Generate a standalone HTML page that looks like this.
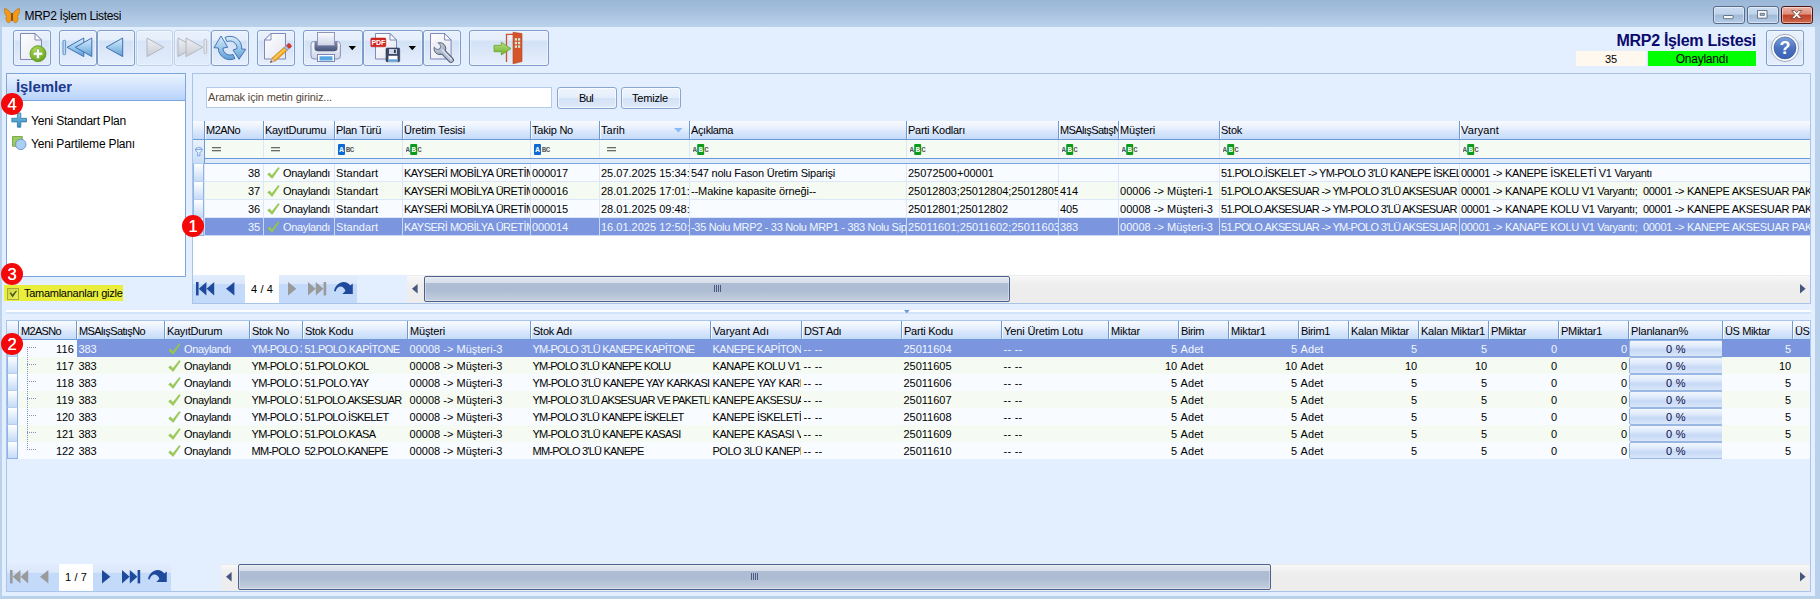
<!DOCTYPE html><html lang="tr"><head><meta charset="utf-8"><title>MRP2 İşlem Listesi</title><style>
*{box-sizing:border-box;margin:0;padding:0}
html,body{width:1820px;height:599px;overflow:hidden;background:#b9d1ea}
body{position:relative;font-family:"Liberation Sans",sans-serif;font-size:11px;color:#000;line-height:1}
.a{position:absolute}
.t{position:absolute;white-space:nowrap;overflow:hidden}
#title{left:0;top:0;width:1820px;height:27px;background:linear-gradient(#9bb7d7,#a5bfdd 40%,#bbd2eb)}
#client{left:2px;top:27px;width:1813px;height:569px;background:#e3eefe}
.tb{position:absolute;top:30px;height:36px;border:1px solid #7f9dca;border-radius:3px;background:linear-gradient(#e9f1fc 0,#e5eefb 27%,#d3e2f6 29%,#dbe7f9 60%,#e6effc 100%);box-shadow:inset 0 0 0 1px rgba(255,255,255,.4)}
.tb.dis{border-color:#c0d1ea;background:linear-gradient(#e9f1fc 0,#e5eefb 27%,#d8e5f8 29%,#e1ecfb 100%)}
.panel{position:absolute;border:1px solid #a9c4e9}
.hdr{position:absolute;background:linear-gradient(#f9fbff 0,#e8f0fd 38%,#d4e4fb 68%,#c5dafa 100%);border-bottom:1px solid #6b9ad9}
.hc{position:absolute;top:0;height:100%;border-left:1px solid #6b9ad9;box-shadow:inset 1px 0 0 rgba(255,255,255,.8);overflow:hidden}
.hc span{position:absolute;left:1px;white-space:nowrap}
.row{position:absolute;left:0}
.c{position:absolute;top:0;height:100%;overflow:hidden;white-space:nowrap;padding:1px 0 0 2.5px;line-height:17px}
.g1 .c{border-left:1px solid #dce8f8;padding-left:1px;padding-top:1px}
.c.r{text-align:right;padding-right:1px}
.sel .c{color:#f2f6fe;border-left-color:#cbd9f4}
.ind{position:absolute;left:0;width:11px;border:1px solid #8fb3e6;border-top-color:#b7cff0;background:linear-gradient(#ffffff,#c6dbf8)}
.btn{position:absolute;border:1px solid #8aa6d0;border-radius:3px;background:linear-gradient(#eff5fd 0,#e3edfb 48%,#d3e1f6 52%,#e0ebfa 100%);text-align:center;box-shadow:inset 0 0 0 1px rgba(255,255,255,.6)}
.red{position:absolute;width:22px;height:22px;border-radius:11px;background:#f50808;color:#fff;text-align:center;font-size:16.5px;line-height:22px;text-shadow:0 0 .6px #fff}
.nav{position:absolute;background:linear-gradient(#e2ecfc 0,#dbe7fb 31%,#c3dafa 34%,#c3dafa 100%)}
.sb{position:absolute;background:linear-gradient(#e0e0e0 0,#f8f8f8 4%,#f4f4f4 14%,#eeeeee 34%,#ededed 100%)}
.thumb{position:absolute;border:1px solid #4e618e;border-radius:2px;background:linear-gradient(#e3e8ef 0,#d7dee8 25%,#aebdd3 26%,#adbcd2 55%,#c5d0e0 100%);box-shadow:inset 0 0 0 1px rgba(255,255,255,.35)}
.pg{position:absolute;left:1px;top:0;height:17px;border:1px solid #9ab7e3;border-radius:2px;background:linear-gradient(#f2f7fe 0,#dfeafb 35%,#c6d9f5 60%,#d9e6fa 100%);color:#0a0a4a;text-align:center;line-height:17px}
</style></head><body>
<svg width="0" height="0" style="position:absolute"><defs>
<linearGradient id="gPage" x1="0" y1="0" x2="1" y2="1"><stop offset="0" stop-color="#ffffff"/><stop offset="1" stop-color="#e3e6f1"/></linearGradient>
<linearGradient id="gBlue" x1="0" y1="0" x2="0" y2="1"><stop offset="0" stop-color="#d8ecf9"/><stop offset=".5" stop-color="#9cc9ea"/><stop offset="1" stop-color="#5f9dd3"/></linearGradient>
<linearGradient id="gGray" x1="0" y1="0" x2="0" y2="1"><stop offset="0" stop-color="#eef0f4"/><stop offset="1" stop-color="#c9ccd4"/></linearGradient>
<radialGradient id="gGreen" cx=".4" cy=".3" r=".8"><stop offset="0" stop-color="#b4dc5c"/><stop offset=".6" stop-color="#7fb82c"/><stop offset="1" stop-color="#5c961c"/></radialGradient>
<linearGradient id="gHelp" x1="0" y1="0" x2="0" y2="1"><stop offset="0" stop-color="#7fa3dc"/><stop offset=".5" stop-color="#4a72c0"/><stop offset="1" stop-color="#3a63b4"/></linearGradient>
<linearGradient id="gPrn" x1="0" y1="0" x2="0" y2="1"><stop offset="0" stop-color="#fbfcfe"/><stop offset="1" stop-color="#cfd5e6"/></linearGradient>
<linearGradient id="gSlot" x1="0" y1="0" x2="0" y2="1"><stop offset="0" stop-color="#7d8aa8"/><stop offset="1" stop-color="#46527a"/></linearGradient>
<linearGradient id="gArrow" x1="0" y1="0" x2="0" y2="1"><stop offset="0" stop-color="#b8e07a"/><stop offset="1" stop-color="#6fae2f"/></linearGradient>
<linearGradient id="gWr" x1="0" y1="0" x2="1" y2="1"><stop offset="0" stop-color="#dfe6f0"/><stop offset="1" stop-color="#8c9ab0"/></linearGradient>
<linearGradient id="gPlus" x1="0" y1="0" x2="0" y2="1"><stop offset="0" stop-color="#7cc0e0"/><stop offset="1" stop-color="#3a8cc0"/></linearGradient>
</defs></svg>
<div id="title" class="a"></div>
<svg class="a" style="left:4px;top:8px" width="16" height="16" viewBox="0 0 16 16" ><path d="M7.6 7.2 C6 2.5 2.5 .6 .4 .6 C.2 4 1.2 7 2.6 8.4 C1.4 9.6 1.6 12.6 3.6 14.4 C5.4 15.6 7 13.6 7.6 10.6 Z" fill="#f49a12" stroke="#a8621a" stroke-width=".5"/><path d="M8.4 7.2 C10 2.5 13.5 .6 15.6 .6 C15.8 4 14.8 7 13.4 8.4 C14.6 9.6 14.4 12.6 12.4 14.4 C10.6 15.6 9 13.6 8.4 10.6 Z" fill="#f49a12" stroke="#a8621a" stroke-width=".5"/><path d="M8 5.4 V12.4" stroke="#5a3418" stroke-width="1.3" stroke-linecap="round"/></svg>
<div class="t" style="left:24.5px;top:9px;font-size:12px;letter-spacing:-0.345px;line-height:15px;">MRP2 İşlem Listesi</div>
<div class="a" style="left:1713px;top:6px;width:32px;height:18px;border:1px solid #586c8a;border-radius:3px;background:linear-gradient(#cbdcf0 0,#bed3eb 45%,#9fb9d7 50%,#b5cce7 100%);box-shadow:inset 0 0 0 1px rgba(255,255,255,.45)"></div>
<div class="a" style="left:1747px;top:6px;width:32px;height:18px;border:1px solid #586c8a;border-radius:3px;background:linear-gradient(#cbdcf0 0,#bed3eb 45%,#9fb9d7 50%,#b5cce7 100%);box-shadow:inset 0 0 0 1px rgba(255,255,255,.45)"></div>
<div class="a" style="left:1781px;top:6px;width:32px;height:18px;border:1px solid #4e1616;border-radius:3px;background:linear-gradient(#eab2a4 0,#de8e7c 45%,#bf3f26 50%,#d0694d 100%);box-shadow:inset 0 0 0 1px rgba(255,255,255,.45)"></div>
<svg class="a" style="left:1723px;top:15px" width="11" height="5" viewBox="0 0 11 5" ><rect x=".5" y=".5" width="9.6" height="3.2" rx=".6" fill="#f4f6f8" stroke="#4c5a70" stroke-width=".8"/></svg>
<svg class="a" style="left:1757px;top:10px" width="11" height="9" viewBox="0 0 11 9" ><path d="M.5 .5 H10 V8.2 H.5 Z M3.2 3.4 H7.4 V5.3 H3.2 Z" fill="#f4f6f8" fill-rule="evenodd" stroke="#4c5a70" stroke-width=".8"/></svg>
<svg class="a" style="left:1791px;top:10px" width="12" height="10" viewBox="0 0 12 10" ><path d="M.6 .6 L3.8 .6 L5.7 2.7 L7.6 .6 L10.8 .6 L7.4 4.5 L11 8.6 L7.7 8.6 L5.7 6.3 L3.7 8.6 L.4 8.6 L4 4.5 Z" fill="#f8f8f8" stroke="#5a2a22" stroke-width=".7" stroke-linejoin="round"/></svg>
<div id="client" class="a"></div>
<div class="tb" style="left:13px;width:38px"></div>
<svg class="a" style="left:13px;top:30px" width="38" height="36" viewBox="0 0 38 36" ><g transform="translate(7,3)"><path d="M.5 .5 H15 L21.5 7 V26.5 H.5 Z" fill="url(#gPage)" stroke="#747db2" stroke-width=".9"/><path d="M15 .5 V7 H21.5 Z" fill="#fdfdff" stroke="#747db2" stroke-width=".9" stroke-linejoin="round"/></g><circle cx="25" cy="23.7" r="8" fill="url(#gGreen)" stroke="#5a9420" stroke-width=".8"/><path d="M23.5 19 h3 v3.2 h3.2 v3 h-3.2 v3.2 h-3 v-3.2 h-3.2 v-3 h3.2 Z" fill="#fff" stroke="#6a9a3a" stroke-width=".5"/></svg>
<div class="tb" style="left:59px;width:38px"></div>
<svg class="a" style="left:59px;top:30px" width="38" height="36" viewBox="0 0 38 36" ><rect x="4" y="10.3" width="2.6" height="14.4" rx="1" fill="#b8dbf3" stroke="#4a7cc0" stroke-width=".8"/><path d="M8 17.3 L24.8 8.0 V26.6 Z" fill="url(#gBlue)" stroke="#3f6fb5" stroke-width="1" stroke-linejoin="round"/><path d="M16.4 17.3 L32.8 8.0 V26.6 Z" fill="url(#gBlue)" stroke="#3f6fb5" stroke-width="1" stroke-linejoin="round"/></svg>
<div class="tb" style="left:97px;width:38px"></div>
<svg class="a" style="left:97px;top:30px" width="38" height="36" viewBox="0 0 38 36" ><path d="M9 17.3 L25.7 8.0 V26.6 Z" fill="url(#gBlue)" stroke="#3f6fb5" stroke-width="1" stroke-linejoin="round"/></svg>
<div class="tb dis" style="left:136px;width:37px"></div>
<svg class="a" style="left:135px;top:30px" width="38" height="36" viewBox="0 0 38 36" ><path d="M28.7 17.3 L12 8 V26.6 Z" fill="url(#gGray)" stroke="#b3b6bf" stroke-width="1" stroke-linejoin="round"/></svg>
<div class="tb dis" style="left:174px;width:37px"></div>
<svg class="a" style="left:173px;top:30px" width="38" height="36" viewBox="0 0 38 36" ><path d="M22 17.3 L5 8 V26.6 Z" fill="url(#gGray)" stroke="#b3b6bf" stroke-width="1" stroke-linejoin="round"/><path d="M29.7 17.3 L13 8 V26.6 Z" fill="url(#gGray)" stroke="#b3b6bf" stroke-width="1" stroke-linejoin="round"/><rect x="31" y="9.3" width="2.6" height="14.4" rx="1" fill="#e4e6ea" stroke="#b3b6bf" stroke-width=".8"/></svg>
<div class="tb" style="left:211px;width:38px"></div>
<svg class="a" style="left:211px;top:30px" width="38" height="36" viewBox="0 0 38 36" ><path d="M10 6 L3 17.7 L7.3 18 A11.7 11.7 0 0 0 23.94 28.6 L21.96 24.34 A7 7 0 0 1 12 18 L16.7 17.3 Z" fill="url(#gBlue)" stroke="#3a6ab2" stroke-width=".9" stroke-linejoin="round"/><path d="M14.06 7.4 A11.7 11.7 0 0 1 30.66 19 L34.7 19.3 L28 29.3 L22 20 L25.97 18.6 A7 7 0 0 0 16.04 11.66 Z" fill="url(#gBlue)" stroke="#3a6ab2" stroke-width=".9" stroke-linejoin="round"/></svg>
<div class="tb" style="left:257px;width:38px"></div>
<svg class="a" style="left:257px;top:30px" width="38" height="36" viewBox="0 0 38 36" ><g transform="translate(7,3)"><path d="M7 .5 H21.5 V26.0 H.5 V7 Z" fill="url(#gPage)" stroke="#747db2" stroke-width=".9"/><path d="M7 .5 V7 H.5 Z" fill="#fdfdff" stroke="#747db2" stroke-width=".9" stroke-linejoin="round"/></g><g transform="translate(13.2,32.6) rotate(-41.6)"><path d="M0 0 L5 -2.2 V2.2 Z" fill="#e9c9a0" stroke="#8a6a40" stroke-width=".4"/><path d="M0 0 L1.8 -.95 V.95 Z" fill="#2c2c3a"/><rect x="5" y="-2.2" width="15.5" height="4.4" fill="#f3a61c" stroke="#b87408" stroke-width=".5"/><rect x="5" y="-.9" width="15.5" height="1.4" fill="#fbd069"/><rect x="20.5" y="-2.2" width="3" height="4.4" fill="#a9b7d6" stroke="#6d7da6" stroke-width=".4"/><rect x="23.5" y="-2.2" width="3.6" height="4.4" rx="1" fill="#d9372a" stroke="#a02018" stroke-width=".4"/></g></svg>
<div class="tb" style="left:303px;width:60px"></div>
<svg class="a" style="left:303px;top:30px" width="60" height="36" viewBox="0 0 60 36" ><rect x="8" y="11.5" width="29.4" height="17.5" rx="3" fill="url(#gPrn)" stroke="#8790bd" stroke-width="1"/><path d="M11.5 12 H34.5 V18 Q34.5 21.3 31 21.3 H15 Q11.5 21.3 11.5 18 Z" fill="url(#gSlot)"/><rect x="14.5" y="2.5" width="17" height="13" fill="url(#gPrn)" stroke="#8e95b8" stroke-width="1"/><rect x="14.5" y="24.5" width="17" height="7" fill="#fff" stroke="#7d86b4" stroke-width="1"/><rect x="16.5" y="26.3" width="13" height="4.2" fill="#56a6e4"/><path d="M45.6 16 h7.4 l-3.7 4.2 Z" fill="#000"/></svg>
<div class="tb" style="left:363px;width:60px"></div>
<svg class="a" style="left:363px;top:30px" width="60" height="36" viewBox="0 0 60 36" ><g transform="translate(12,3)"><path d="M.5 .5 H15 L21.5 7 V26.0 H.5 Z" fill="url(#gPage)" stroke="#747db2" stroke-width=".9"/><path d="M15 .5 V7 H21.5 Z" fill="#fdfdff" stroke="#747db2" stroke-width=".9" stroke-linejoin="round"/></g><rect x="7.8" y="8" width="15" height="8.8" rx="1" fill="#d42626" stroke="#b01818" stroke-width=".5"/><text x="15.3" y="15" font-family="Liberation Sans,sans-serif" font-weight="bold" font-size="7" fill="#fff" text-anchor="middle" letter-spacing="-.2">PDF</text><rect x="23" y="18" width="13.7" height="13.7" rx="1" fill="#3d4868" stroke="#2c3552" stroke-width=".6"/><rect x="26" y="19" width="8" height="5" fill="#cfd6e6"/><rect x="31" y="19.6" width="1.8" height="3.4" fill="#2c3552"/><rect x="25.5" y="25.8" width="9" height="5.9" fill="#fff"/><rect x="25.5" y="29.3" width="9" height="2.4" fill="#5aa4e0"/><path d="M45.6 16 h7.4 l-3.7 4.2 Z" fill="#000"/></svg>
<div class="tb" style="left:423px;width:38px"></div>
<svg class="a" style="left:423px;top:30px" width="38" height="36" viewBox="0 0 38 36" ><g transform="translate(7,3)"><path d="M.5 .5 H14.600000000000001 L21.1 7 V26.0 H.5 Z" fill="url(#gPage)" stroke="#747db2" stroke-width=".9"/><path d="M14.600000000000001 .5 V7 H21.1 Z" fill="#fdfdff" stroke="#747db2" stroke-width=".9" stroke-linejoin="round"/></g><path d="M18 19.8 L28 30" stroke="#4e5a72" stroke-width="5.8" stroke-linecap="round"/><circle cx="16.9" cy="18.6" r="5.9" fill="url(#gWr)" stroke="#4e5a72" stroke-width="1"/><path d="M18 19.8 L28 30" stroke="#b4c0d3" stroke-width="3.9" stroke-linecap="round"/><path d="M19 19.6 L28.4 29.2" stroke="#dde4ee" stroke-width="1.3" stroke-linecap="round"/><circle cx="14.7" cy="16.5" r="3" fill="#eceef6" stroke="#4e5a72" stroke-width=".8"/><path d="M14.7 16.5 L10.2 12.2" stroke="#eef0f8" stroke-width="5" stroke-linecap="butt"/></svg>
<div class="tb" style="left:469px;width:80px"></div>
<svg class="a" style="left:469px;top:30px" width="80" height="36" viewBox="0 0 80 36" ><path d="M37.5 32 V4.4 H45" fill="none" stroke="#d0512a" stroke-width="1.3"/><path d="M44 2.2 L53 3.6 V31.6 L44 33.8 Z" fill="#d4542b" stroke="#b8431f" stroke-width=".6"/><rect x="45.8" y="8.2" width="2.2" height="2.4" fill="#cdeedd"/><rect x="49.0" y="8.2" width="2.2" height="2.4" fill="#cdeedd"/><rect x="45.8" y="11.799999999999999" width="2.2" height="2.4" fill="#cdeedd"/><rect x="49.0" y="11.799999999999999" width="2.2" height="2.4" fill="#cdeedd"/><rect x="45.8" y="15.399999999999999" width="2.2" height="2.4" fill="#cdeedd"/><rect x="49.0" y="15.399999999999999" width="2.2" height="2.4" fill="#cdeedd"/><path d="M25 15.3 H32.3 V12.2 L42 18.6 L32.3 25 V21.7 H25 Z" fill="url(#gArrow)" stroke="#6aa32e" stroke-width=".8" stroke-linejoin="round"/></svg>
<div class="tb" style="left:1766px;width:38px"></div>
<svg class="a" style="left:1766px;top:30px" width="38" height="36" viewBox="0 0 38 36" ><circle cx="19" cy="17.9" r="13.6" fill="#fff" stroke="#8790a8" stroke-width=".8"/><circle cx="19" cy="17.9" r="11" fill="url(#gHelp)" stroke="#2f4f98" stroke-width=".6"/><text x="19" y="24.2" font-family="Liberation Sans,sans-serif" font-weight="bold" font-size="18" fill="#fff" text-anchor="middle">?</text></svg>
<div class="t" style="left:1556px;top:31px;font-size:16px;letter-spacing:-0.303px;line-height:20px;font-weight:700;width:200px;text-align:right;color:#0a0a6c;">MRP2 İşlem Listesi</div>
<div class="a" style="left:1576px;top:51px;width:70px;height:15px;background:#fff8ee"></div>
<div class="t" style="left:1576px;top:52px;font-size:11px;letter-spacing:-0.125px;line-height:14px;width:70px;text-align:center;">35</div>
<div class="a" style="left:1648px;top:51px;width:108px;height:15px;background:#00ff00"></div>
<div class="t" style="left:1648px;top:52px;font-size:12px;letter-spacing:-0.245px;line-height:15px;width:108px;text-align:center;">Onaylandı</div>
<div class="panel" style="left:6px;top:73px;width:180px;height:204px;background:#fff;border-color:#7ea6de"></div>
<div class="a" style="left:7px;top:74px;width:178px;height:27px;background:linear-gradient(#e9f2fe 0,#d6e6fd 40%,#b7d3fb 100%);border-bottom:1px solid #7ea6de"></div>
<div class="t" style="left:16px;top:77px;font-size:15px;letter-spacing:-0.09px;line-height:20px;font-weight:700;color:#1b398d;">İşlemler</div>
<svg class="a" style="left:11px;top:112px" width="17" height="16" viewBox="0 0 17 16" ><path d="M6.4 1 h3.4 v5.3 h5.7 v3.6 h-5.7 v5.3 h-3.4 v-5.3 h-5.6 v-3.6 h5.6 Z" fill="url(#gPlus)" stroke="#2f78a6" stroke-width=".8"/></svg>
<svg class="a" style="left:12px;top:136px" width="16" height="16" viewBox="0 0 16 16" ><rect x=".6" y=".6" width="9.6" height="9.6" fill="#9ccc5c" stroke="#6a9c38" stroke-width=".8"/><circle cx="8.8" cy="8.4" r="5.2" fill="#a9cff1" stroke="#5a86c4" stroke-width=".8"/></svg>
<div class="t" style="left:31px;top:114px;font-size:12px;letter-spacing:-0.22px;line-height:15px;">Yeni Standart Plan</div>
<div class="t" style="left:31px;top:137px;font-size:12px;letter-spacing:-0.181px;line-height:15px;">Yeni Partileme Planı</div>
<div class="a" style="left:4px;top:285px;width:119px;height:16px;background:#e8ee3a"></div>
<div class="a" style="left:7px;top:288px;width:12px;height:12px;border:1px solid #a3ab3a;background:linear-gradient(135deg,#cfd640,#eef060)"></div>
<svg class="a" style="left:9px;top:290px" width="9" height="8" viewBox="0 0 9 8" ><path d="M.6 3 L2 2.2 L3.4 4.6 L7 .4 L8 1 L3.6 7.6 Z" fill="#4a5a1a"/></svg>
<div class="t" style="left:24px;top:286px;font-size:11px;letter-spacing:-0.272px;line-height:14px;">Tamamlananları gizle</div>
<div class="panel" style="left:192px;top:73px;width:1619px;height:231px;"></div>
<div class="a" style="left:206px;top:87px;width:346px;height:21px;background:#fff;border:1px solid #b3cbeb"></div>
<div class="t" style="left:208px;top:90px;font-size:11px;letter-spacing:-0.156px;line-height:14px;color:#54463a;">Aramak için metin giriniz...</div>
<div class="btn" style="left:557px;top:87px;width:60px;height:22px"></div>
<div class="btn" style="left:621px;top:87px;width:60px;height:22px"></div>
<div class="t" style="left:556px;top:91px;font-size:11px;letter-spacing:-0.635px;line-height:14px;width:60px;text-align:center;">Bul</div>
<div class="t" style="left:620px;top:91px;font-size:11px;letter-spacing:-0.185px;line-height:14px;width:60px;text-align:center;">Temizle</div>
<div class="a" style="left:193px;top:121px;width:1617px;height:154px;background:#fff"></div>
<div class="hdr" style="left:193px;top:121px;width:1617px;height:19px">
<div class="hc" style="left:0px;width:11px;border-left:none;box-shadow:none;"></div>
<div class="hc" style="left:11px;width:59px;"><span style="left:1px;top:2px;letter-spacing:-0.537px;line-height:14px">M2ANo</span></div>
<div class="hc" style="left:70px;width:71px;"><span style="left:1px;top:2px;letter-spacing:-0.291px;line-height:14px">KayıtDurumu</span></div>
<div class="hc" style="left:141px;width:68px;"><span style="left:1px;top:2px;letter-spacing:-0.278px;line-height:14px">Plan Türü</span></div>
<div class="hc" style="left:209px;width:128px;"><span style="left:1px;top:2px;letter-spacing:-0.136px;line-height:14px">Üretim Tesisi</span></div>
<div class="hc" style="left:337px;width:69px;"><span style="left:1px;top:2px;letter-spacing:-0.225px;line-height:14px">Takip No</span></div>
<div class="hc" style="left:406px;width:90px;"><span style="left:1px;top:2px;letter-spacing:0.031px;line-height:14px">Tarih</span></div>
<div class="hc" style="left:496px;width:217px;"><span style="left:1px;top:2px;letter-spacing:-0.406px;line-height:14px">Açıklama</span></div>
<div class="hc" style="left:713px;width:152px;"><span style="left:1px;top:2px;letter-spacing:-0.272px;line-height:14px">Parti Kodları</span></div>
<div class="hc" style="left:865px;width:60px;"><span style="left:1px;top:2px;letter-spacing:-0.613px;line-height:14px">MSAlışSatışNo</span></div>
<div class="hc" style="left:925px;width:101px;"><span style="left:1px;top:2px;letter-spacing:-0.152px;line-height:14px">Müşteri</span></div>
<div class="hc" style="left:1026px;width:240px;"><span style="left:1px;top:2px;letter-spacing:-0.254px;line-height:14px">Stok</span></div>
<div class="hc" style="left:1266px;width:351px;"><span style="left:1px;top:2px;letter-spacing:0.129px;line-height:14px">Varyant</span></div>
</div>
<svg class="a" style="left:674px;top:128px" width="9" height="5" viewBox="0 0 9 5" ><path d="M0 0 H8.6 L4.3 4.6 Z" fill="#8ab9f6"/></svg>
<div class="a" style="left:193px;top:140px;width:1617px;height:18px;background:#f5fbf3"></div>
<div class="a" style="left:193px;top:140px;width:11px;height:24px;background:linear-gradient(#eaf2fd,#c8dcf8)"></div>
<div class="a" style="left:204px;top:140px;width:1px;height:24px;background:#6b9ad9"></div>
<svg class="a" style="left:195px;top:147px" width="8" height="10" viewBox="0 0 8 10" ><path d="M.6 2.2 Q.6 .6 3.8 .6 Q7 .6 7 2.2 V3.4 L4.9 5.6 V8.8 H2.7 V5.6 L.6 3.4 Z M.6 2.6 H7" fill="#eef5fe" stroke="#5b8fd8" stroke-width=".8"/></svg>
<div class="a" style="left:263px;top:140px;width:1px;height:18px;background:#dce8f8"></div>
<div class="a" style="left:334px;top:140px;width:1px;height:18px;background:#dce8f8"></div>
<div class="a" style="left:402px;top:140px;width:1px;height:18px;background:#dce8f8"></div>
<div class="a" style="left:530px;top:140px;width:1px;height:18px;background:#dce8f8"></div>
<div class="a" style="left:599px;top:140px;width:1px;height:18px;background:#dce8f8"></div>
<div class="a" style="left:689px;top:140px;width:1px;height:18px;background:#dce8f8"></div>
<div class="a" style="left:906px;top:140px;width:1px;height:18px;background:#dce8f8"></div>
<div class="a" style="left:1058px;top:140px;width:1px;height:18px;background:#dce8f8"></div>
<div class="a" style="left:1118px;top:140px;width:1px;height:18px;background:#dce8f8"></div>
<div class="a" style="left:1219px;top:140px;width:1px;height:18px;background:#dce8f8"></div>
<div class="a" style="left:1459px;top:140px;width:1px;height:18px;background:#dce8f8"></div>
<svg class="a" style="left:212px;top:147px" width="10" height="5" viewBox="0 0 10 5" ><rect x="0" y="0" width="9" height="1.3" fill="#6a6a6a"/><rect x="0" y="3" width="9" height="1.3" fill="#6a6a6a"/></svg>
<svg class="a" style="left:271px;top:147px" width="10" height="5" viewBox="0 0 10 5" ><rect x="0" y="0" width="9" height="1.3" fill="#6a6a6a"/><rect x="0" y="3" width="9" height="1.3" fill="#6a6a6a"/></svg>
<svg class="a" style="left:338px;top:144px" width="17" height="11" viewBox="0 0 17 11" ><rect x="0" y="0" width="7" height="11" rx="1" fill="#0b6ad6"/><text x="3.5" y="8.3" font-family="Liberation Mono,monospace" font-weight="bold" font-size="7.5" fill="#fff" text-anchor="middle">A</text><text x="10" y="8.3" font-family="Liberation Mono,monospace" font-weight="bold" font-size="7.5" fill="#5a5a5a" text-anchor="middle">B</text><text x="14" y="8.3" font-family="Liberation Mono,monospace" font-weight="bold" font-size="7.5" fill="#5a5a5a" text-anchor="middle">C</text></svg>
<svg class="a" style="left:406px;top:144px" width="17" height="11" viewBox="0 0 17 11" ><rect x="4.2" y="0" width="7" height="11" rx="1" fill="#0a9a1c"/><text x="1.8" y="8.3" font-family="Liberation Mono,monospace" font-weight="bold" font-size="7.5" fill="#5a5a5a" text-anchor="middle">A</text><text x="7.7" y="8.3" font-family="Liberation Mono,monospace" font-weight="bold" font-size="7.5" fill="#fff" text-anchor="middle">B</text><text x="13.6" y="8.3" font-family="Liberation Mono,monospace" font-weight="bold" font-size="7.5" fill="#5a5a5a" text-anchor="middle">C</text></svg>
<svg class="a" style="left:534px;top:144px" width="17" height="11" viewBox="0 0 17 11" ><rect x="0" y="0" width="7" height="11" rx="1" fill="#0b6ad6"/><text x="3.5" y="8.3" font-family="Liberation Mono,monospace" font-weight="bold" font-size="7.5" fill="#fff" text-anchor="middle">A</text><text x="10" y="8.3" font-family="Liberation Mono,monospace" font-weight="bold" font-size="7.5" fill="#5a5a5a" text-anchor="middle">B</text><text x="14" y="8.3" font-family="Liberation Mono,monospace" font-weight="bold" font-size="7.5" fill="#5a5a5a" text-anchor="middle">C</text></svg>
<svg class="a" style="left:607px;top:147px" width="10" height="5" viewBox="0 0 10 5" ><rect x="0" y="0" width="9" height="1.3" fill="#6a6a6a"/><rect x="0" y="3" width="9" height="1.3" fill="#6a6a6a"/></svg>
<svg class="a" style="left:693px;top:144px" width="17" height="11" viewBox="0 0 17 11" ><rect x="4.2" y="0" width="7" height="11" rx="1" fill="#0a9a1c"/><text x="1.8" y="8.3" font-family="Liberation Mono,monospace" font-weight="bold" font-size="7.5" fill="#5a5a5a" text-anchor="middle">A</text><text x="7.7" y="8.3" font-family="Liberation Mono,monospace" font-weight="bold" font-size="7.5" fill="#fff" text-anchor="middle">B</text><text x="13.6" y="8.3" font-family="Liberation Mono,monospace" font-weight="bold" font-size="7.5" fill="#5a5a5a" text-anchor="middle">C</text></svg>
<svg class="a" style="left:910px;top:144px" width="17" height="11" viewBox="0 0 17 11" ><rect x="4.2" y="0" width="7" height="11" rx="1" fill="#0a9a1c"/><text x="1.8" y="8.3" font-family="Liberation Mono,monospace" font-weight="bold" font-size="7.5" fill="#5a5a5a" text-anchor="middle">A</text><text x="7.7" y="8.3" font-family="Liberation Mono,monospace" font-weight="bold" font-size="7.5" fill="#fff" text-anchor="middle">B</text><text x="13.6" y="8.3" font-family="Liberation Mono,monospace" font-weight="bold" font-size="7.5" fill="#5a5a5a" text-anchor="middle">C</text></svg>
<svg class="a" style="left:1062px;top:144px" width="17" height="11" viewBox="0 0 17 11" ><rect x="4.2" y="0" width="7" height="11" rx="1" fill="#0a9a1c"/><text x="1.8" y="8.3" font-family="Liberation Mono,monospace" font-weight="bold" font-size="7.5" fill="#5a5a5a" text-anchor="middle">A</text><text x="7.7" y="8.3" font-family="Liberation Mono,monospace" font-weight="bold" font-size="7.5" fill="#fff" text-anchor="middle">B</text><text x="13.6" y="8.3" font-family="Liberation Mono,monospace" font-weight="bold" font-size="7.5" fill="#5a5a5a" text-anchor="middle">C</text></svg>
<svg class="a" style="left:1122px;top:144px" width="17" height="11" viewBox="0 0 17 11" ><rect x="4.2" y="0" width="7" height="11" rx="1" fill="#0a9a1c"/><text x="1.8" y="8.3" font-family="Liberation Mono,monospace" font-weight="bold" font-size="7.5" fill="#5a5a5a" text-anchor="middle">A</text><text x="7.7" y="8.3" font-family="Liberation Mono,monospace" font-weight="bold" font-size="7.5" fill="#fff" text-anchor="middle">B</text><text x="13.6" y="8.3" font-family="Liberation Mono,monospace" font-weight="bold" font-size="7.5" fill="#5a5a5a" text-anchor="middle">C</text></svg>
<svg class="a" style="left:1223px;top:144px" width="17" height="11" viewBox="0 0 17 11" ><rect x="4.2" y="0" width="7" height="11" rx="1" fill="#0a9a1c"/><text x="1.8" y="8.3" font-family="Liberation Mono,monospace" font-weight="bold" font-size="7.5" fill="#5a5a5a" text-anchor="middle">A</text><text x="7.7" y="8.3" font-family="Liberation Mono,monospace" font-weight="bold" font-size="7.5" fill="#fff" text-anchor="middle">B</text><text x="13.6" y="8.3" font-family="Liberation Mono,monospace" font-weight="bold" font-size="7.5" fill="#5a5a5a" text-anchor="middle">C</text></svg>
<svg class="a" style="left:1463px;top:144px" width="17" height="11" viewBox="0 0 17 11" ><rect x="4.2" y="0" width="7" height="11" rx="1" fill="#0a9a1c"/><text x="1.8" y="8.3" font-family="Liberation Mono,monospace" font-weight="bold" font-size="7.5" fill="#5a5a5a" text-anchor="middle">A</text><text x="7.7" y="8.3" font-family="Liberation Mono,monospace" font-weight="bold" font-size="7.5" fill="#fff" text-anchor="middle">B</text><text x="13.6" y="8.3" font-family="Liberation Mono,monospace" font-weight="bold" font-size="7.5" fill="#5a5a5a" text-anchor="middle">C</text></svg>
<div class="a" style="left:204px;top:158px;width:1606px;height:1px;background:#6b9ad9"></div>
<div class="a" style="left:205px;top:159px;width:1605px;height:4px;background:#dfeafc"></div>
<div class="a" style="left:193px;top:163px;width:1617px;height:1px;background:#7ea6de"></div>
<div class="row g1" style="left:193px;top:164px;width:1617px;height:17px;background:#f8fbff">
<div class="c r" style="left:11px;width:59px;letter-spacing:-0.125px;padding-right:3px;">38</div>
<div class="c" style="left:70px;width:71px;letter-spacing:-0.351px;padding-left:19px;"><svg class="a" style="left:3px;top:3px" width="13" height="12" viewBox="0 0 13 12" ><path d="M.6 7.4 L2.5 5.8 L4.9 8.5 L11.3 .4 L12.3 1.2 L5.2 11.5 Z" fill="#9ccb55" stroke="#86b840" stroke-width=".45" stroke-linejoin="round"/></svg>Onaylandı</div>
<div class="c" style="left:141px;width:68px;letter-spacing:0.051px;">Standart</div>
<div class="c" style="left:209px;width:128px;letter-spacing:-0.501px;">KAYSERİ MOBİLYA ÜRETİM TESİSİ</div>
<div class="c" style="left:337px;width:69px;letter-spacing:-0.12px;">000017</div>
<div class="c" style="left:406px;width:90px;letter-spacing:0.003px;">25.07.2025 15:34:10</div>
<div class="c" style="left:496px;width:217px;letter-spacing:-0.214px;">547 nolu Fason Üretim Siparişi</div>
<div class="c" style="left:713px;width:152px;letter-spacing:0.002px;">25072500+00001</div>
<div class="c" style="left:865px;width:60px;letter-spacing:0px;"></div>
<div class="c" style="left:925px;width:101px;letter-spacing:0px;"></div>
<div class="c" style="left:1026px;width:240px;letter-spacing:-0.631px;">51.POLO.İSKELET -&gt; YM-POLO 3'LÜ KANEPE İSKELET</div>
<div class="c" style="left:1266px;width:351px;letter-spacing:-0.319px;">00001 -&gt; KANEPE İSKELETİ V1 Varyantı</div>
</div>
<div class="a" style="left:204px;top:181px;width:1606px;height:1px;background:#dce8f8"></div>
<div class="ind" style="left:193px;top:163px;height:19px"></div>
<div class="row g1" style="left:193px;top:182px;width:1617px;height:17px;background:#f5fbf3">
<div class="c r" style="left:11px;width:59px;letter-spacing:-0.125px;padding-right:3px;">37</div>
<div class="c" style="left:70px;width:71px;letter-spacing:-0.351px;padding-left:19px;"><svg class="a" style="left:3px;top:3px" width="13" height="12" viewBox="0 0 13 12" ><path d="M.6 7.4 L2.5 5.8 L4.9 8.5 L11.3 .4 L12.3 1.2 L5.2 11.5 Z" fill="#9ccb55" stroke="#86b840" stroke-width=".45" stroke-linejoin="round"/></svg>Onaylandı</div>
<div class="c" style="left:141px;width:68px;letter-spacing:0.051px;">Standart</div>
<div class="c" style="left:209px;width:128px;letter-spacing:-0.501px;">KAYSERİ MOBİLYA ÜRETİM TESİSİ</div>
<div class="c" style="left:337px;width:69px;letter-spacing:-0.12px;">000016</div>
<div class="c" style="left:406px;width:90px;letter-spacing:0.003px;">28.01.2025 17:01:10</div>
<div class="c" style="left:496px;width:217px;letter-spacing:-0.107px;">--Makine kapasite örneği--</div>
<div class="c" style="left:713px;width:152px;letter-spacing:-0.036px;">25012803;25012804;25012805</div>
<div class="c" style="left:865px;width:60px;letter-spacing:-0.12px;">414</div>
<div class="c" style="left:925px;width:101px;letter-spacing:0.02px;">00006 -&gt; Müşteri-1</div>
<div class="c" style="left:1026px;width:240px;letter-spacing:-0.671px;">51.POLO.AKSESUAR -&gt; YM-POLO 3'LÜ AKSESUAR VE PAKETLEME</div>
<div class="c" style="left:1266px;width:351px;letter-spacing:-0.323px;">00001 -&gt; KANAPE KOLU V1 Varyantı;&nbsp; 00001 -&gt; KANEPE AKSESUAR PAKETİ V1 Varyantı</div>
</div>
<div class="a" style="left:204px;top:199px;width:1606px;height:1px;background:#dce8f8"></div>
<div class="ind" style="left:193px;top:181px;height:19px"></div>
<div class="row g1" style="left:193px;top:200px;width:1617px;height:17px;background:#f8fbff">
<div class="c r" style="left:11px;width:59px;letter-spacing:-0.125px;padding-right:3px;">36</div>
<div class="c" style="left:70px;width:71px;letter-spacing:-0.351px;padding-left:19px;"><svg class="a" style="left:3px;top:3px" width="13" height="12" viewBox="0 0 13 12" ><path d="M.6 7.4 L2.5 5.8 L4.9 8.5 L11.3 .4 L12.3 1.2 L5.2 11.5 Z" fill="#9ccb55" stroke="#86b840" stroke-width=".45" stroke-linejoin="round"/></svg>Onaylandı</div>
<div class="c" style="left:141px;width:68px;letter-spacing:0.051px;">Standart</div>
<div class="c" style="left:209px;width:128px;letter-spacing:-0.501px;">KAYSERİ MOBİLYA ÜRETİM TESİSİ</div>
<div class="c" style="left:337px;width:69px;letter-spacing:-0.12px;">000015</div>
<div class="c" style="left:406px;width:90px;letter-spacing:0.003px;">28.01.2025 09:48:10</div>
<div class="c" style="left:496px;width:217px;letter-spacing:0px;"></div>
<div class="c" style="left:713px;width:152px;letter-spacing:-0.056px;">25012801;25012802</div>
<div class="c" style="left:865px;width:60px;letter-spacing:-0.12px;">405</div>
<div class="c" style="left:925px;width:101px;letter-spacing:0.02px;">00008 -&gt; Müşteri-3</div>
<div class="c" style="left:1026px;width:240px;letter-spacing:-0.671px;">51.POLO.AKSESUAR -&gt; YM-POLO 3'LÜ AKSESUAR VE PAKETLEME</div>
<div class="c" style="left:1266px;width:351px;letter-spacing:-0.323px;">00001 -&gt; KANAPE KOLU V1 Varyantı;&nbsp; 00001 -&gt; KANEPE AKSESUAR PAKETİ V1 Varyantı</div>
</div>
<div class="a" style="left:204px;top:217px;width:1606px;height:1px;background:#dce8f8"></div>
<div class="ind" style="left:193px;top:199px;height:19px"></div>
<div class="row g1 sel" style="left:193px;top:218px;width:1617px;height:17px;background:#7b96de">
<div class="c r" style="left:11px;width:59px;letter-spacing:-0.125px;padding-right:3px;">35</div>
<div class="c" style="left:70px;width:71px;letter-spacing:-0.351px;padding-left:19px;"><svg class="a" style="left:3px;top:3px" width="13" height="12" viewBox="0 0 13 12" ><path d="M.6 7.4 L2.5 5.8 L4.9 8.5 L11.3 .4 L12.3 1.2 L5.2 11.5 Z" fill="#9ccb55" stroke="#86b840" stroke-width=".45" stroke-linejoin="round"/></svg>Onaylandı</div>
<div class="c" style="left:141px;width:68px;letter-spacing:0.051px;">Standart</div>
<div class="c" style="left:209px;width:128px;letter-spacing:-0.501px;">KAYSERİ MOBİLYA ÜRETİM TESİSİ</div>
<div class="c" style="left:337px;width:69px;letter-spacing:-0.12px;">000014</div>
<div class="c" style="left:406px;width:90px;letter-spacing:0.003px;">16.01.2025 12:50:10</div>
<div class="c" style="left:496px;width:217px;letter-spacing:-0.319px;">-35 Nolu MRP2 - 33 Nolu MRP1 - 383 Nolu Sipariş</div>
<div class="c" style="left:713px;width:152px;letter-spacing:0.058px;">25011601;25011602;25011603</div>
<div class="c" style="left:865px;width:60px;letter-spacing:-0.12px;">383</div>
<div class="c" style="left:925px;width:101px;letter-spacing:0.02px;">00008 -&gt; Müşteri-3</div>
<div class="c" style="left:1026px;width:240px;letter-spacing:-0.671px;">51.POLO.AKSESUAR -&gt; YM-POLO 3'LÜ AKSESUAR VE PAKETLEME</div>
<div class="c" style="left:1266px;width:351px;letter-spacing:-0.323px;">00001 -&gt; KANAPE KOLU V1 Varyantı;&nbsp; 00001 -&gt; KANEPE AKSESUAR PAKETİ V1 Varyantı</div>
</div>
<div class="a" style="left:204px;top:235px;width:1606px;height:1px;background:#cbd9f4"></div>
<div class="ind" style="left:193px;top:217px;height:19px"></div>
<div class="a" style="left:193px;top:275px;width:1617px;height:28px;background:#e3eefe"></div>
<div class="nav" style="left:193px;top:275px;width:52px;height:28px"></div>
<div class="a" style="left:245px;top:275px;width:34px;height:28px;background:#fff"></div>
<div class="t" style="left:245px;top:282px;font-size:11px;letter-spacing:0.119px;line-height:14px;width:34px;text-align:center;">4 / 4</div>
<div class="nav" style="left:279px;top:275px;width:78px;height:28px"></div>
<svg class="a" style="left:196px;top:282px" width="19" height="14" viewBox="0 0 19 14" ><rect x="0" y="0" width="2.6" height="13.4" fill="#1f4a9c"/><path d="M10.4 0 V13.4 L2.8 6.7 Z M18.2 0 V13.4 L10.6 6.7 Z" fill="#1f4a9c"/></svg>
<svg class="a" style="left:226px;top:282px" width="9" height="14" viewBox="0 0 9 14" ><path d="M8.4 0 V13.4 L0 6.7 Z" fill="#1f4a9c"/></svg>
<svg class="a" style="left:288px;top:282px" width="9" height="14" viewBox="0 0 9 14" ><path d="M0 0 V13.4 L8.4 6.7 Z" fill="#9a9a9a"/></svg>
<svg class="a" style="left:307.5px;top:282px" width="19" height="14" viewBox="0 0 19 14" ><rect x="15.6" y="0" width="2.6" height="13.4" fill="#9a9a9a"/><path d="M0 0 V13.4 L7.6 6.7 Z M7.8 0 V13.4 L15.4 6.7 Z" fill="#9a9a9a"/></svg>
<svg class="a" style="left:333.5px;top:282px" width="20" height="14" viewBox="0 0 20 14" ><path d="M0 9 C1 3.5 5.5 0 9.5 0 C12.5 0 14.8 1.4 16.2 3.6 L18.8 1.4 V11.9 H8.3 L11.4 9 C10.6 6.4 8.6 4.6 6.6 4.6 C4.4 4.6 2.6 6.4 1.6 9.6 Z" fill="#1f4a9c"/></svg>
<div class="sb" style="left:407px;top:275px;width:1403px;height:28px"></div>
<svg class="a" style="left:412px;top:284px" width="6" height="10" viewBox="0 0 6 10" ><path d="M5.6 0 V9.4 L0 4.7 Z" fill="#46557c"/></svg>
<svg class="a" style="left:1800px;top:284px" width="6" height="10" viewBox="0 0 6 10" ><path d="M0 0 V9.4 L5.6 4.7 Z" fill="#46557c"/></svg>
<div class="thumb" style="left:424px;top:276px;width:586px;height:26px"></div>
<div class="a" style="left:714px;top:285px;width:1px;height:7px;background:#4a5b80"></div>
<div class="a" style="left:716px;top:285px;width:1px;height:7px;background:#4a5b80"></div>
<div class="a" style="left:718px;top:285px;width:1px;height:7px;background:#4a5b80"></div>
<div class="a" style="left:720px;top:285px;width:1px;height:7px;background:#4a5b80"></div>
<div class="a" style="left:6px;top:310px;width:1805px;height:2px;background:#fbfdff"></div>
<div class="a" style="left:6px;top:312px;width:1805px;height:2px;background:#d3e3f9"></div>
<svg class="a" style="left:904px;top:310px" width="6" height="4" viewBox="0 0 6 4" ><path d="M0 0 H5.6 L2.8 3.4 Z" fill="#6b9ad9"/></svg>
<div class="panel" style="left:6px;top:320px;width:1805px;height:272px"></div>
<div class="hdr" style="left:7px;top:321px;width:1803px;height:19px">
<div class="hc" style="left:0px;width:11px;border-left:none;box-shadow:none;"></div>
<div class="hc" style="left:11px;width:58px;"><span style="left:2px;top:3px;letter-spacing:-0.672px;line-height:14px">M2ASNo</span></div>
<div class="hc" style="left:69px;width:88px;"><span style="left:2px;top:3px;letter-spacing:-0.613px;line-height:14px">MSAlışSatışNo</span></div>
<div class="hc" style="left:157px;width:85px;"><span style="left:2px;top:3px;letter-spacing:-0.308px;line-height:14px">KayıtDurum</span></div>
<div class="hc" style="left:242px;width:53px;"><span style="left:2px;top:3px;letter-spacing:-0.306px;line-height:14px">Stok No</span></div>
<div class="hc" style="left:295px;width:105px;"><span style="left:2px;top:3px;letter-spacing:-0.307px;line-height:14px">Stok Kodu</span></div>
<div class="hc" style="left:400px;width:123px;"><span style="left:2px;top:3px;letter-spacing:-0.152px;line-height:14px">Müşteri</span></div>
<div class="hc" style="left:523px;width:180px;"><span style="left:2px;top:3px;letter-spacing:-0.248px;line-height:14px">Stok Adı</span></div>
<div class="hc" style="left:703px;width:91px;"><span style="left:2px;top:3px;letter-spacing:-0.006px;line-height:14px">Varyant Adı</span></div>
<div class="hc" style="left:794px;width:100px;"><span style="left:2px;top:3px;letter-spacing:-0.538px;line-height:14px">DST Adı</span></div>
<div class="hc" style="left:894px;width:100px;"><span style="left:2px;top:3px;letter-spacing:-0.237px;line-height:14px">Parti Kodu</span></div>
<div class="hc" style="left:994px;width:107px;"><span style="left:2px;top:3px;letter-spacing:-0.12px;line-height:14px">Yeni Üretim Lotu</span></div>
<div class="hc" style="left:1101px;width:70px;"><span style="left:2px;top:3px;letter-spacing:-0.159px;line-height:14px">Miktar</span></div>
<div class="hc" style="left:1171px;width:50px;"><span style="left:2px;top:3px;letter-spacing:-0.412px;line-height:14px">Birim</span></div>
<div class="hc" style="left:1221px;width:70px;"><span style="left:2px;top:3px;letter-spacing:-0.152px;line-height:14px">Miktar1</span></div>
<div class="hc" style="left:1291px;width:50px;"><span style="left:2px;top:3px;letter-spacing:-0.362px;line-height:14px">Birim1</span></div>
<div class="hc" style="left:1341px;width:70px;"><span style="left:2px;top:3px;letter-spacing:-0.262px;line-height:14px">Kalan Miktar</span></div>
<div class="hc" style="left:1411px;width:70px;"><span style="left:2px;top:3px;letter-spacing:-0.251px;line-height:14px">Kalan Miktar1</span></div>
<div class="hc" style="left:1481px;width:70px;"><span style="left:2px;top:3px;letter-spacing:-0.326px;line-height:14px">PMiktar</span></div>
<div class="hc" style="left:1551px;width:70px;"><span style="left:2px;top:3px;letter-spacing:-0.301px;line-height:14px">PMiktar1</span></div>
<div class="hc" style="left:1621px;width:94px;"><span style="left:2px;top:3px;letter-spacing:-0.172px;line-height:14px">Planlanan%</span></div>
<div class="hc" style="left:1715px;width:70px;"><span style="left:2px;top:3px;letter-spacing:-0.365px;line-height:14px">ÜS Miktar</span></div>
<div class="hc" style="left:1785px;width:18px;"><span style="left:2px;top:3px;letter-spacing:-0.341px;line-height:14px">ÜS Miktar1</span></div>
</div>
<div class="row" style="left:7px;top:340px;width:1803px;height:17px;background:#f8fbff"></div>
<div class="a" style="left:77px;top:340px;width:1733px;height:17px;background:#7b96de"></div>
<div class="row sel" style="left:7px;top:340px;width:1803px;height:17px">
<div class="c r" style="left:11px;width:58px;letter-spacing:0.151px;color:#000;padding-right:2px;">116</div>
<div class="c" style="left:69px;width:88px;letter-spacing:-0.12px;">383</div>
<div class="c" style="left:157px;width:85px;letter-spacing:-0.351px;padding-left:20px;"><svg class="a" style="left:4px;top:3px" width="13" height="12" viewBox="0 0 13 12" ><path d="M.6 7.4 L2.5 5.8 L4.9 8.5 L11.3 .4 L12.3 1.2 L5.2 11.5 Z" fill="#9ccb55" stroke="#86b840" stroke-width=".45" stroke-linejoin="round"/></svg>Onaylandı</div>
<div class="c" style="left:242px;width:53px;letter-spacing:-0.673px;">YM-POLO 3'LÜ</div>
<div class="c" style="left:295px;width:105px;letter-spacing:-0.584px;">51.POLO.KAPİTONE</div>
<div class="c" style="left:400px;width:123px;letter-spacing:0.02px;">00008 -&gt; Müşteri-3</div>
<div class="c" style="left:523px;width:180px;letter-spacing:-0.723px;">YM-POLO 3'LÜ KANEPE KAPİTONE</div>
<div class="c" style="left:703px;width:91px;letter-spacing:-0.475px;">KANEPE KAPİTONE V1 Varyantı</div>
<div class="c" style="left:794px;width:100px;letter-spacing:0.256px;">-- --</div>
<div class="c" style="left:894px;width:100px;letter-spacing:-0.016px;">25011604</div>
<div class="c" style="left:994px;width:107px;letter-spacing:0.256px;">-- --</div>
<div class="c r" style="left:1101px;width:70px;letter-spacing:-0.125px;">5</div>
<div class="c" style="left:1171px;width:50px;letter-spacing:0.09px;">Adet</div>
<div class="c r" style="left:1221px;width:70px;letter-spacing:-0.125px;">5</div>
<div class="c" style="left:1291px;width:50px;letter-spacing:0.09px;">Adet</div>
<div class="c r" style="left:1341px;width:70px;letter-spacing:-0.125px;">5</div>
<div class="c r" style="left:1411px;width:70px;letter-spacing:-0.125px;">5</div>
<div class="c r" style="left:1481px;width:70px;letter-spacing:-0.125px;">0</div>
<div class="c r" style="left:1551px;width:70px;letter-spacing:-0.125px;">0</div>
<div class="c" style="left:1621px;width:94px;letter-spacing:0.344px;padding:0;"><div class="pg" style="width:94px">0 %</div></div>
<div class="c r" style="left:1715px;width:70px;letter-spacing:-0.125px;">5</div>
<div class="c" style="left:1785px;width:18px;letter-spacing:0px;"></div>
</div>
<div class="ind" style="left:7px;top:339px;height:18px"></div>
<svg class="a" style="left:27px;top:347px" width="9" height="1" viewBox="0 0 9 1" ><rect x="0" y="0" width="1" height="1" fill="#7f93b8"/><rect x="2" y="0" width="1" height="1" fill="#7f93b8"/><rect x="4" y="0" width="1" height="1" fill="#7f93b8"/><rect x="6" y="0" width="1" height="1" fill="#7f93b8"/><rect x="8" y="0" width="1" height="1" fill="#7f93b8"/></svg>
<div class="row" style="left:7px;top:357px;width:1803px;height:17px;background:#f5fbf3"></div>
<div class="row" style="left:7px;top:357px;width:1803px;height:17px">
<div class="c r" style="left:11px;width:58px;letter-spacing:0.151px;color:#000;padding-right:2px;">117</div>
<div class="c" style="left:69px;width:88px;letter-spacing:-0.12px;">383</div>
<div class="c" style="left:157px;width:85px;letter-spacing:-0.351px;padding-left:20px;"><svg class="a" style="left:4px;top:3px" width="13" height="12" viewBox="0 0 13 12" ><path d="M.6 7.4 L2.5 5.8 L4.9 8.5 L11.3 .4 L12.3 1.2 L5.2 11.5 Z" fill="#9ccb55" stroke="#86b840" stroke-width=".45" stroke-linejoin="round"/></svg>Onaylandı</div>
<div class="c" style="left:242px;width:53px;letter-spacing:-0.673px;">YM-POLO 3'LÜ</div>
<div class="c" style="left:295px;width:105px;letter-spacing:-0.631px;">51.POLO.KOL</div>
<div class="c" style="left:400px;width:123px;letter-spacing:0.02px;">00008 -&gt; Müşteri-3</div>
<div class="c" style="left:523px;width:180px;letter-spacing:-0.782px;">YM-POLO 3'LÜ KANEPE KOLU</div>
<div class="c" style="left:703px;width:91px;letter-spacing:-0.45px;">KANAPE KOLU V1 Varyantı</div>
<div class="c" style="left:794px;width:100px;letter-spacing:0.256px;">-- --</div>
<div class="c" style="left:894px;width:100px;letter-spacing:-0.016px;">25011605</div>
<div class="c" style="left:994px;width:107px;letter-spacing:0.256px;">-- --</div>
<div class="c r" style="left:1101px;width:70px;letter-spacing:-0.125px;">10</div>
<div class="c" style="left:1171px;width:50px;letter-spacing:0.09px;">Adet</div>
<div class="c r" style="left:1221px;width:70px;letter-spacing:-0.125px;">10</div>
<div class="c" style="left:1291px;width:50px;letter-spacing:0.09px;">Adet</div>
<div class="c r" style="left:1341px;width:70px;letter-spacing:-0.125px;">10</div>
<div class="c r" style="left:1411px;width:70px;letter-spacing:-0.125px;">10</div>
<div class="c r" style="left:1481px;width:70px;letter-spacing:-0.125px;">0</div>
<div class="c r" style="left:1551px;width:70px;letter-spacing:-0.125px;">0</div>
<div class="c" style="left:1621px;width:94px;letter-spacing:0.344px;padding:0;"><div class="pg" style="width:94px">0 %</div></div>
<div class="c r" style="left:1715px;width:70px;letter-spacing:-0.125px;">10</div>
<div class="c" style="left:1785px;width:18px;letter-spacing:0px;"></div>
</div>
<div class="ind" style="left:7px;top:356px;height:18px"></div>
<svg class="a" style="left:27px;top:364px" width="9" height="1" viewBox="0 0 9 1" ><rect x="0" y="0" width="1" height="1" fill="#7f93b8"/><rect x="2" y="0" width="1" height="1" fill="#7f93b8"/><rect x="4" y="0" width="1" height="1" fill="#7f93b8"/><rect x="6" y="0" width="1" height="1" fill="#7f93b8"/><rect x="8" y="0" width="1" height="1" fill="#7f93b8"/></svg>
<div class="row" style="left:7px;top:374px;width:1803px;height:17px;background:#f8fbff"></div>
<div class="row" style="left:7px;top:374px;width:1803px;height:17px">
<div class="c r" style="left:11px;width:58px;letter-spacing:0.151px;color:#000;padding-right:2px;">118</div>
<div class="c" style="left:69px;width:88px;letter-spacing:-0.12px;">383</div>
<div class="c" style="left:157px;width:85px;letter-spacing:-0.351px;padding-left:20px;"><svg class="a" style="left:4px;top:3px" width="13" height="12" viewBox="0 0 13 12" ><path d="M.6 7.4 L2.5 5.8 L4.9 8.5 L11.3 .4 L12.3 1.2 L5.2 11.5 Z" fill="#9ccb55" stroke="#86b840" stroke-width=".45" stroke-linejoin="round"/></svg>Onaylandı</div>
<div class="c" style="left:242px;width:53px;letter-spacing:-0.673px;">YM-POLO 3'LÜ</div>
<div class="c" style="left:295px;width:105px;letter-spacing:-0.482px;">51.POLO.YAY</div>
<div class="c" style="left:400px;width:123px;letter-spacing:0.02px;">00008 -&gt; Müşteri-3</div>
<div class="c" style="left:523px;width:180px;letter-spacing:-0.662px;">YM-POLO 3'LÜ KANEPE YAY KARKASI</div>
<div class="c" style="left:703px;width:91px;letter-spacing:-0.438px;">KANEPE YAY KARKASI V1 Varyantı</div>
<div class="c" style="left:794px;width:100px;letter-spacing:0.256px;">-- --</div>
<div class="c" style="left:894px;width:100px;letter-spacing:-0.016px;">25011606</div>
<div class="c" style="left:994px;width:107px;letter-spacing:0.256px;">-- --</div>
<div class="c r" style="left:1101px;width:70px;letter-spacing:-0.125px;">5</div>
<div class="c" style="left:1171px;width:50px;letter-spacing:0.09px;">Adet</div>
<div class="c r" style="left:1221px;width:70px;letter-spacing:-0.125px;">5</div>
<div class="c" style="left:1291px;width:50px;letter-spacing:0.09px;">Adet</div>
<div class="c r" style="left:1341px;width:70px;letter-spacing:-0.125px;">5</div>
<div class="c r" style="left:1411px;width:70px;letter-spacing:-0.125px;">5</div>
<div class="c r" style="left:1481px;width:70px;letter-spacing:-0.125px;">0</div>
<div class="c r" style="left:1551px;width:70px;letter-spacing:-0.125px;">0</div>
<div class="c" style="left:1621px;width:94px;letter-spacing:0.344px;padding:0;"><div class="pg" style="width:94px">0 %</div></div>
<div class="c r" style="left:1715px;width:70px;letter-spacing:-0.125px;">5</div>
<div class="c" style="left:1785px;width:18px;letter-spacing:0px;"></div>
</div>
<div class="ind" style="left:7px;top:373px;height:18px"></div>
<svg class="a" style="left:27px;top:381px" width="9" height="1" viewBox="0 0 9 1" ><rect x="0" y="0" width="1" height="1" fill="#7f93b8"/><rect x="2" y="0" width="1" height="1" fill="#7f93b8"/><rect x="4" y="0" width="1" height="1" fill="#7f93b8"/><rect x="6" y="0" width="1" height="1" fill="#7f93b8"/><rect x="8" y="0" width="1" height="1" fill="#7f93b8"/></svg>
<div class="row" style="left:7px;top:391px;width:1803px;height:17px;background:#f5fbf3"></div>
<div class="row" style="left:7px;top:391px;width:1803px;height:17px">
<div class="c r" style="left:11px;width:58px;letter-spacing:0.151px;color:#000;padding-right:2px;">119</div>
<div class="c" style="left:69px;width:88px;letter-spacing:-0.12px;">383</div>
<div class="c" style="left:157px;width:85px;letter-spacing:-0.351px;padding-left:20px;"><svg class="a" style="left:4px;top:3px" width="13" height="12" viewBox="0 0 13 12" ><path d="M.6 7.4 L2.5 5.8 L4.9 8.5 L11.3 .4 L12.3 1.2 L5.2 11.5 Z" fill="#9ccb55" stroke="#86b840" stroke-width=".45" stroke-linejoin="round"/></svg>Onaylandı</div>
<div class="c" style="left:242px;width:53px;letter-spacing:-0.673px;">YM-POLO 3'LÜ</div>
<div class="c" style="left:295px;width:105px;letter-spacing:-0.739px;">51.POLO.AKSESUAR</div>
<div class="c" style="left:400px;width:123px;letter-spacing:0.02px;">00008 -&gt; Müşteri-3</div>
<div class="c" style="left:523px;width:180px;letter-spacing:-0.777px;">YM-POLO 3'LÜ AKSESUAR VE PAKETLEME</div>
<div class="c" style="left:703px;width:91px;letter-spacing:-0.532px;">KANEPE AKSESUAR PAKETİ V1 Varyantı</div>
<div class="c" style="left:794px;width:100px;letter-spacing:0.256px;">-- --</div>
<div class="c" style="left:894px;width:100px;letter-spacing:-0.016px;">25011607</div>
<div class="c" style="left:994px;width:107px;letter-spacing:0.256px;">-- --</div>
<div class="c r" style="left:1101px;width:70px;letter-spacing:-0.125px;">5</div>
<div class="c" style="left:1171px;width:50px;letter-spacing:0.09px;">Adet</div>
<div class="c r" style="left:1221px;width:70px;letter-spacing:-0.125px;">5</div>
<div class="c" style="left:1291px;width:50px;letter-spacing:0.09px;">Adet</div>
<div class="c r" style="left:1341px;width:70px;letter-spacing:-0.125px;">5</div>
<div class="c r" style="left:1411px;width:70px;letter-spacing:-0.125px;">5</div>
<div class="c r" style="left:1481px;width:70px;letter-spacing:-0.125px;">0</div>
<div class="c r" style="left:1551px;width:70px;letter-spacing:-0.125px;">0</div>
<div class="c" style="left:1621px;width:94px;letter-spacing:0.344px;padding:0;"><div class="pg" style="width:94px">0 %</div></div>
<div class="c r" style="left:1715px;width:70px;letter-spacing:-0.125px;">5</div>
<div class="c" style="left:1785px;width:18px;letter-spacing:0px;"></div>
</div>
<div class="ind" style="left:7px;top:390px;height:18px"></div>
<svg class="a" style="left:27px;top:398px" width="9" height="1" viewBox="0 0 9 1" ><rect x="0" y="0" width="1" height="1" fill="#7f93b8"/><rect x="2" y="0" width="1" height="1" fill="#7f93b8"/><rect x="4" y="0" width="1" height="1" fill="#7f93b8"/><rect x="6" y="0" width="1" height="1" fill="#7f93b8"/><rect x="8" y="0" width="1" height="1" fill="#7f93b8"/></svg>
<div class="row" style="left:7px;top:408px;width:1803px;height:17px;background:#f8fbff"></div>
<div class="row" style="left:7px;top:408px;width:1803px;height:17px">
<div class="c r" style="left:11px;width:58px;letter-spacing:-0.12px;color:#000;padding-right:2px;">120</div>
<div class="c" style="left:69px;width:88px;letter-spacing:-0.12px;">383</div>
<div class="c" style="left:157px;width:85px;letter-spacing:-0.351px;padding-left:20px;"><svg class="a" style="left:4px;top:3px" width="13" height="12" viewBox="0 0 13 12" ><path d="M.6 7.4 L2.5 5.8 L4.9 8.5 L11.3 .4 L12.3 1.2 L5.2 11.5 Z" fill="#9ccb55" stroke="#86b840" stroke-width=".45" stroke-linejoin="round"/></svg>Onaylandı</div>
<div class="c" style="left:242px;width:53px;letter-spacing:-0.673px;">YM-POLO 3'LÜ</div>
<div class="c" style="left:295px;width:105px;letter-spacing:-0.677px;">51.POLO.İSKELET</div>
<div class="c" style="left:400px;width:123px;letter-spacing:0.02px;">00008 -&gt; Müşteri-3</div>
<div class="c" style="left:523px;width:180px;letter-spacing:-0.78px;">YM-POLO 3'LÜ KANEPE İSKELET</div>
<div class="c" style="left:703px;width:91px;letter-spacing:-0.47px;">KANEPE İSKELETİ V1 Varyantı</div>
<div class="c" style="left:794px;width:100px;letter-spacing:0.256px;">-- --</div>
<div class="c" style="left:894px;width:100px;letter-spacing:-0.016px;">25011608</div>
<div class="c" style="left:994px;width:107px;letter-spacing:0.256px;">-- --</div>
<div class="c r" style="left:1101px;width:70px;letter-spacing:-0.125px;">5</div>
<div class="c" style="left:1171px;width:50px;letter-spacing:0.09px;">Adet</div>
<div class="c r" style="left:1221px;width:70px;letter-spacing:-0.125px;">5</div>
<div class="c" style="left:1291px;width:50px;letter-spacing:0.09px;">Adet</div>
<div class="c r" style="left:1341px;width:70px;letter-spacing:-0.125px;">5</div>
<div class="c r" style="left:1411px;width:70px;letter-spacing:-0.125px;">5</div>
<div class="c r" style="left:1481px;width:70px;letter-spacing:-0.125px;">0</div>
<div class="c r" style="left:1551px;width:70px;letter-spacing:-0.125px;">0</div>
<div class="c" style="left:1621px;width:94px;letter-spacing:0.344px;padding:0;"><div class="pg" style="width:94px">0 %</div></div>
<div class="c r" style="left:1715px;width:70px;letter-spacing:-0.125px;">5</div>
<div class="c" style="left:1785px;width:18px;letter-spacing:0px;"></div>
</div>
<div class="ind" style="left:7px;top:407px;height:18px"></div>
<svg class="a" style="left:27px;top:415px" width="9" height="1" viewBox="0 0 9 1" ><rect x="0" y="0" width="1" height="1" fill="#7f93b8"/><rect x="2" y="0" width="1" height="1" fill="#7f93b8"/><rect x="4" y="0" width="1" height="1" fill="#7f93b8"/><rect x="6" y="0" width="1" height="1" fill="#7f93b8"/><rect x="8" y="0" width="1" height="1" fill="#7f93b8"/></svg>
<div class="row" style="left:7px;top:425px;width:1803px;height:17px;background:#f5fbf3"></div>
<div class="row" style="left:7px;top:425px;width:1803px;height:17px">
<div class="c r" style="left:11px;width:58px;letter-spacing:-0.12px;color:#000;padding-right:2px;">121</div>
<div class="c" style="left:69px;width:88px;letter-spacing:-0.12px;">383</div>
<div class="c" style="left:157px;width:85px;letter-spacing:-0.351px;padding-left:20px;"><svg class="a" style="left:4px;top:3px" width="13" height="12" viewBox="0 0 13 12" ><path d="M.6 7.4 L2.5 5.8 L4.9 8.5 L11.3 .4 L12.3 1.2 L5.2 11.5 Z" fill="#9ccb55" stroke="#86b840" stroke-width=".45" stroke-linejoin="round"/></svg>Onaylandı</div>
<div class="c" style="left:242px;width:53px;letter-spacing:-0.673px;">YM-POLO 3'LÜ</div>
<div class="c" style="left:295px;width:105px;letter-spacing:-0.605px;">51.POLO.KASA</div>
<div class="c" style="left:400px;width:123px;letter-spacing:0.02px;">00008 -&gt; Müşteri-3</div>
<div class="c" style="left:523px;width:180px;letter-spacing:-0.713px;">YM-POLO 3'LÜ KANEPE KASASI</div>
<div class="c" style="left:703px;width:91px;letter-spacing:-0.446px;">KANEPE KASASI V1 Varyantı</div>
<div class="c" style="left:794px;width:100px;letter-spacing:0.256px;">-- --</div>
<div class="c" style="left:894px;width:100px;letter-spacing:-0.016px;">25011609</div>
<div class="c" style="left:994px;width:107px;letter-spacing:0.256px;">-- --</div>
<div class="c r" style="left:1101px;width:70px;letter-spacing:-0.125px;">5</div>
<div class="c" style="left:1171px;width:50px;letter-spacing:0.09px;">Adet</div>
<div class="c r" style="left:1221px;width:70px;letter-spacing:-0.125px;">5</div>
<div class="c" style="left:1291px;width:50px;letter-spacing:0.09px;">Adet</div>
<div class="c r" style="left:1341px;width:70px;letter-spacing:-0.125px;">5</div>
<div class="c r" style="left:1411px;width:70px;letter-spacing:-0.125px;">5</div>
<div class="c r" style="left:1481px;width:70px;letter-spacing:-0.125px;">0</div>
<div class="c r" style="left:1551px;width:70px;letter-spacing:-0.125px;">0</div>
<div class="c" style="left:1621px;width:94px;letter-spacing:0.344px;padding:0;"><div class="pg" style="width:94px">0 %</div></div>
<div class="c r" style="left:1715px;width:70px;letter-spacing:-0.125px;">5</div>
<div class="c" style="left:1785px;width:18px;letter-spacing:0px;"></div>
</div>
<div class="ind" style="left:7px;top:424px;height:18px"></div>
<svg class="a" style="left:27px;top:432px" width="9" height="1" viewBox="0 0 9 1" ><rect x="0" y="0" width="1" height="1" fill="#7f93b8"/><rect x="2" y="0" width="1" height="1" fill="#7f93b8"/><rect x="4" y="0" width="1" height="1" fill="#7f93b8"/><rect x="6" y="0" width="1" height="1" fill="#7f93b8"/><rect x="8" y="0" width="1" height="1" fill="#7f93b8"/></svg>
<div class="row" style="left:7px;top:442px;width:1803px;height:17px;background:#f8fbff"></div>
<div class="row" style="left:7px;top:442px;width:1803px;height:17px">
<div class="c r" style="left:11px;width:58px;letter-spacing:-0.12px;color:#000;padding-right:2px;">122</div>
<div class="c" style="left:69px;width:88px;letter-spacing:-0.12px;">383</div>
<div class="c" style="left:157px;width:85px;letter-spacing:-0.351px;padding-left:20px;"><svg class="a" style="left:4px;top:3px" width="13" height="12" viewBox="0 0 13 12" ><path d="M.6 7.4 L2.5 5.8 L4.9 8.5 L11.3 .4 L12.3 1.2 L5.2 11.5 Z" fill="#9ccb55" stroke="#86b840" stroke-width=".45" stroke-linejoin="round"/></svg>Onaylandı</div>
<div class="c" style="left:242px;width:53px;letter-spacing:-0.659px;">MM-POLO 3'LÜ</div>
<div class="c" style="left:295px;width:105px;letter-spacing:-0.753px;">52.POLO.KANEPE</div>
<div class="c" style="left:400px;width:123px;letter-spacing:0.02px;">00008 -&gt; Müşteri-3</div>
<div class="c" style="left:523px;width:180px;letter-spacing:-0.767px;">MM-POLO 3'LÜ KANEPE</div>
<div class="c" style="left:703px;width:91px;letter-spacing:-0.489px;">POLO 3LÜ KANEPE V1 Varyantı</div>
<div class="c" style="left:794px;width:100px;letter-spacing:0.256px;">-- --</div>
<div class="c" style="left:894px;width:100px;letter-spacing:-0.016px;">25011610</div>
<div class="c" style="left:994px;width:107px;letter-spacing:0.256px;">-- --</div>
<div class="c r" style="left:1101px;width:70px;letter-spacing:-0.125px;">5</div>
<div class="c" style="left:1171px;width:50px;letter-spacing:0.09px;">Adet</div>
<div class="c r" style="left:1221px;width:70px;letter-spacing:-0.125px;">5</div>
<div class="c" style="left:1291px;width:50px;letter-spacing:0.09px;">Adet</div>
<div class="c r" style="left:1341px;width:70px;letter-spacing:-0.125px;">5</div>
<div class="c r" style="left:1411px;width:70px;letter-spacing:-0.125px;">5</div>
<div class="c r" style="left:1481px;width:70px;letter-spacing:-0.125px;">0</div>
<div class="c r" style="left:1551px;width:70px;letter-spacing:-0.125px;">0</div>
<div class="c" style="left:1621px;width:94px;letter-spacing:0.344px;padding:0;"><div class="pg" style="width:94px">0 %</div></div>
<div class="c r" style="left:1715px;width:70px;letter-spacing:-0.125px;">5</div>
<div class="c" style="left:1785px;width:18px;letter-spacing:0px;"></div>
</div>
<div class="ind" style="left:7px;top:441px;height:18px"></div>
<svg class="a" style="left:27px;top:449px" width="9" height="1" viewBox="0 0 9 1" ><rect x="0" y="0" width="1" height="1" fill="#7f93b8"/><rect x="2" y="0" width="1" height="1" fill="#7f93b8"/><rect x="4" y="0" width="1" height="1" fill="#7f93b8"/><rect x="6" y="0" width="1" height="1" fill="#7f93b8"/><rect x="8" y="0" width="1" height="1" fill="#7f93b8"/></svg>
<svg class="a" style="left:27px;top:347px" width="1" height="103" viewBox="0 0 1 103" ><rect x="0" y="0" width="1" height="1" fill="#7f93b8"/><rect x="0" y="2" width="1" height="1" fill="#7f93b8"/><rect x="0" y="4" width="1" height="1" fill="#7f93b8"/><rect x="0" y="6" width="1" height="1" fill="#7f93b8"/><rect x="0" y="8" width="1" height="1" fill="#7f93b8"/><rect x="0" y="10" width="1" height="1" fill="#7f93b8"/><rect x="0" y="12" width="1" height="1" fill="#7f93b8"/><rect x="0" y="14" width="1" height="1" fill="#7f93b8"/><rect x="0" y="16" width="1" height="1" fill="#7f93b8"/><rect x="0" y="18" width="1" height="1" fill="#7f93b8"/><rect x="0" y="20" width="1" height="1" fill="#7f93b8"/><rect x="0" y="22" width="1" height="1" fill="#7f93b8"/><rect x="0" y="24" width="1" height="1" fill="#7f93b8"/><rect x="0" y="26" width="1" height="1" fill="#7f93b8"/><rect x="0" y="28" width="1" height="1" fill="#7f93b8"/><rect x="0" y="30" width="1" height="1" fill="#7f93b8"/><rect x="0" y="32" width="1" height="1" fill="#7f93b8"/><rect x="0" y="34" width="1" height="1" fill="#7f93b8"/><rect x="0" y="36" width="1" height="1" fill="#7f93b8"/><rect x="0" y="38" width="1" height="1" fill="#7f93b8"/><rect x="0" y="40" width="1" height="1" fill="#7f93b8"/><rect x="0" y="42" width="1" height="1" fill="#7f93b8"/><rect x="0" y="44" width="1" height="1" fill="#7f93b8"/><rect x="0" y="46" width="1" height="1" fill="#7f93b8"/><rect x="0" y="48" width="1" height="1" fill="#7f93b8"/><rect x="0" y="50" width="1" height="1" fill="#7f93b8"/><rect x="0" y="52" width="1" height="1" fill="#7f93b8"/><rect x="0" y="54" width="1" height="1" fill="#7f93b8"/><rect x="0" y="56" width="1" height="1" fill="#7f93b8"/><rect x="0" y="58" width="1" height="1" fill="#7f93b8"/><rect x="0" y="60" width="1" height="1" fill="#7f93b8"/><rect x="0" y="62" width="1" height="1" fill="#7f93b8"/><rect x="0" y="64" width="1" height="1" fill="#7f93b8"/><rect x="0" y="66" width="1" height="1" fill="#7f93b8"/><rect x="0" y="68" width="1" height="1" fill="#7f93b8"/><rect x="0" y="70" width="1" height="1" fill="#7f93b8"/><rect x="0" y="72" width="1" height="1" fill="#7f93b8"/><rect x="0" y="74" width="1" height="1" fill="#7f93b8"/><rect x="0" y="76" width="1" height="1" fill="#7f93b8"/><rect x="0" y="78" width="1" height="1" fill="#7f93b8"/><rect x="0" y="80" width="1" height="1" fill="#7f93b8"/><rect x="0" y="82" width="1" height="1" fill="#7f93b8"/><rect x="0" y="84" width="1" height="1" fill="#7f93b8"/><rect x="0" y="86" width="1" height="1" fill="#7f93b8"/><rect x="0" y="88" width="1" height="1" fill="#7f93b8"/><rect x="0" y="90" width="1" height="1" fill="#7f93b8"/><rect x="0" y="92" width="1" height="1" fill="#7f93b8"/><rect x="0" y="94" width="1" height="1" fill="#7f93b8"/><rect x="0" y="96" width="1" height="1" fill="#7f93b8"/><rect x="0" y="98" width="1" height="1" fill="#7f93b8"/><rect x="0" y="100" width="1" height="1" fill="#7f93b8"/></svg>
<div class="nav" style="left:7px;top:564px;width:52px;height:27px"></div>
<div class="a" style="left:59px;top:564px;width:34px;height:27px;background:#fff"></div>
<div class="t" style="left:59px;top:570px;font-size:11px;letter-spacing:0.119px;line-height:14px;width:34px;text-align:center;">1 / 7</div>
<div class="nav" style="left:93px;top:564px;width:78px;height:27px"></div>
<svg class="a" style="left:10px;top:569.5px" width="19" height="14" viewBox="0 0 19 14" ><rect x="0" y="0" width="2.6" height="13.4" fill="#9a9a9a"/><path d="M10.4 0 V13.4 L2.8 6.7 Z M18.2 0 V13.4 L10.6 6.7 Z" fill="#9a9a9a"/></svg>
<svg class="a" style="left:40px;top:569.5px" width="9" height="14" viewBox="0 0 9 14" ><path d="M8.4 0 V13.4 L0 6.7 Z" fill="#9a9a9a"/></svg>
<svg class="a" style="left:102px;top:569.5px" width="9" height="14" viewBox="0 0 9 14" ><path d="M0 0 V13.4 L8.4 6.7 Z" fill="#1f4a9c"/></svg>
<svg class="a" style="left:121.5px;top:569.5px" width="19" height="14" viewBox="0 0 19 14" ><rect x="15.6" y="0" width="2.6" height="13.4" fill="#1f4a9c"/><path d="M0 0 V13.4 L7.6 6.7 Z M7.8 0 V13.4 L15.4 6.7 Z" fill="#1f4a9c"/></svg>
<svg class="a" style="left:147.5px;top:569.5px" width="20" height="14" viewBox="0 0 20 14" ><path d="M0 9 C1 3.5 5.5 0 9.5 0 C12.5 0 14.8 1.4 16.2 3.6 L18.8 1.4 V11.9 H8.3 L11.4 9 C10.6 6.4 8.6 4.6 6.6 4.6 C4.4 4.6 2.6 6.4 1.6 9.6 Z" fill="#1f4a9c"/></svg>
<div class="sb" style="left:221px;top:564px;width:1589px;height:27px"></div>
<svg class="a" style="left:226px;top:572px" width="6" height="10" viewBox="0 0 6 10" ><path d="M5.6 0 V9.4 L0 4.7 Z" fill="#46557c"/></svg>
<svg class="a" style="left:1800px;top:572px" width="6" height="10" viewBox="0 0 6 10" ><path d="M0 0 V9.4 L5.6 4.7 Z" fill="#46557c"/></svg>
<div class="thumb" style="left:238px;top:564px;width:1033px;height:26px"></div>
<div class="a" style="left:751px;top:573px;width:1px;height:7px;background:#4a5b80"></div>
<div class="a" style="left:753px;top:573px;width:1px;height:7px;background:#4a5b80"></div>
<div class="a" style="left:755px;top:573px;width:1px;height:7px;background:#4a5b80"></div>
<div class="a" style="left:757px;top:573px;width:1px;height:7px;background:#4a5b80"></div>
<div class="red" style="left:1px;top:93px">4</div>
<div class="red" style="left:182px;top:215px">1</div>
<div class="red" style="left:1px;top:263px">3</div>
<div class="red" style="left:1px;top:333px">2</div>
</body></html>
